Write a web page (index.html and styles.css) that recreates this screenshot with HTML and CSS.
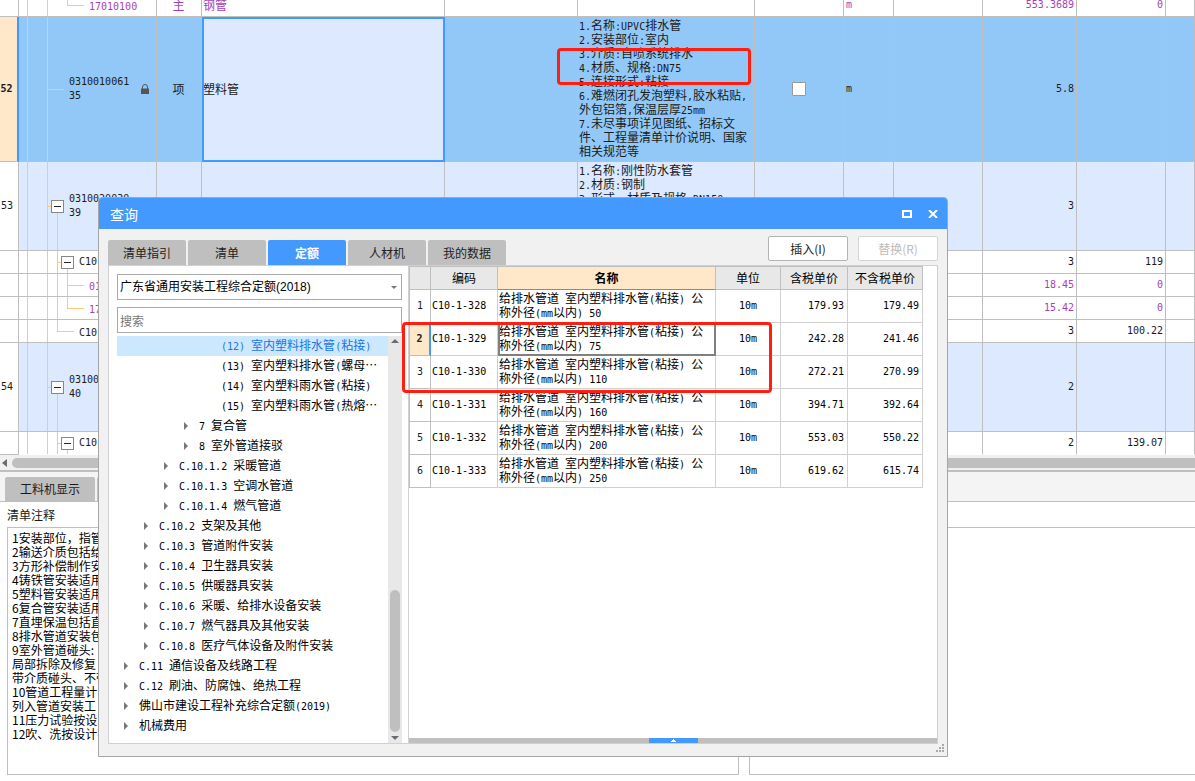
FILE: index.html
```html
<!DOCTYPE html>
<html lang="zh-CN">
<head>
<meta charset="utf-8">
<title>查询</title>
<link rel="stylesheet" href="styles.css">
</head>
<body>
<main class="workspace">
  <div class="sheet-view">
    <table class="sheet">
      <colgroup>
        <col class="w-no"><col class="w-code"><col class="w-type"><col class="w-name"><col class="w-spec"><col class="w-desc">
        <col class="w-check"><col class="w-unit"><col class="w-check"><col class="w-qty"><col class="w-check"><col>
      </colgroup>
      <tbody>
        <tr class="sub res">
          <th></th><td class="g g-first in-3"><span class="n">17010100</span></td><td class="mid">主</td><td>钢管</td><td></td><td></td><td></td><td class="n">m</td><td></td><td class="num">553.3689</td><td class="num">0</td><td></td>
        </tr>
        <tr class="current">
          <th>52</th>
          <td class="g g-leaf in-1">
            <div class="locked"><span class="n code">0310010061<br>35</span>
              <svg class="lock" viewBox="0 0 8 10" width="8" height="10"><path d="M1.5 5V3a2.5 2.5 0 0 1 5 0v2" fill="none" stroke="#555" stroke-width="1"/><path d="M0 4.5h8V10H0z" fill="#555"/></svg>
            </div>
          </td>
          <td class="mid">项</td><td class="active">塑料管</td><td></td>
          <td class="desc"><span class="n">1.</span>名称<span class="n">:UPVC</span>排水管<br><span class="n">2.</span>安装部位<span class="n">:</span>室内<br><span class="n">3.</span>介质<span class="n">:</span>自喷系统排水<br><span class="n">4.</span>材质、规格<span class="n">:DN75</span><br><span class="n">5.</span>连接形式<span class="n">:</span>粘接<br><span class="n">6.</span>难燃闭孔发泡塑料<span class="n">,</span>胶水粘贴<span class="n">,</span><br>外包铝箔<span class="n">,</span>保温层厚<span class="n">25mm</span><br><span class="n">7.</span>未尽事项详见图纸、招标文<br>件、工程量清单计价说明、国家<br>相关规范等</td>
          <td class="mid"><input class="check" type="checkbox" aria-label="选择"></td><td class="n">m</td><td></td><td class="num">5.8</td><td></td><td></td>
        </tr>
        <tr class="item">
          <th>53</th>
          <td class="g g-open1 in-box1"><div class="node"><button class="fold" aria-label="折叠"></button><span class="n code">0310020030<br>39</span></div></td>
          <td></td><td></td><td></td>
          <td class="desc"><span class="n">1.</span>名称<span class="n">:</span>刚性防水套管<br><span class="n">2.</span>材质<span class="n">:</span>钢制<br><span class="n">3.</span>形式、材质及规格<span class="n">:DN150</span></td>
          <td></td><td></td><td></td><td class="num">3</td><td></td><td></td>
        </tr>
        <tr class="sub"><th></th><td class="g g-open2 in-box2"><div class="node"><button class="fold" aria-label="折叠"></button><span class="n code">C10-</span></div></td><td></td><td></td><td></td><td></td><td></td><td></td><td></td><td class="num">3</td><td class="num">119</td><td></td></tr>
        <tr class="sub res"><th></th><td class="g g-mid in-3"><span class="n">01</span></td><td></td><td></td><td></td><td></td><td></td><td></td><td></td><td class="num">18.45</td><td class="num">0</td><td></td></tr>
        <tr class="sub res"><th></th><td class="g g-end in-3"><span class="n">17</span></td><td></td><td></td><td></td><td></td><td></td><td></td><td></td><td class="num">15.42</td><td class="num">0</td><td></td></tr>
        <tr class="sub"><th></th><td class="g g-last in-2"><span class="n">C10-</span></td><td></td><td></td><td></td><td></td><td></td><td></td><td></td><td class="num">3</td><td class="num">100.22</td><td></td></tr>
        <tr class="item">
          <th>54</th>
          <td class="g g-open1 in-box1"><div class="node"><button class="fold" aria-label="折叠"></button><span class="n code">0310020030<br>40</span></div></td>
          <td></td><td></td><td></td><td></td><td></td><td></td><td></td><td class="num">2</td><td></td><td></td>
        </tr>
        <tr class="sub tail"><th></th><td class="g g-open2 in-box2"><div class="node"><button class="fold" aria-label="折叠"></button><span class="n code">C10-</span></div></td><td></td><td></td><td></td><td></td><td></td><td></td><td></td><td class="num">2</td><td class="num">139.07</td><td></td></tr>
      </tbody>
    </table>
  </div>
  <div class="hscroll"><svg viewBox="0 0 5 8" width="5" height="8"><path d="M5 0v8L0 4z" fill="#6b6b75"/></svg><span class="hthumb"></span></div>
  <div class="bottom-tabs"><button class="btab">工料机显示</button><button class="btab" aria-label="更多"></button></div>
  <div class="notes">
    <section class="note">
      <label for="note-text">清单注释</label>
      <textarea id="note-text" readonly>1安装部位，指管
2输送介质包括给
3方形补偿制作安
4铸铁管安装适用
5塑料管安装适用
6复合管安装适用
7直埋保温包括直
8排水管道安装包
9室外管道碰头:
局部拆除及修复
带介质碰头、不带
10管道工程量计
列入管道安装工
11压力试验按设
12吹、洗按设计要</textarea>
    </section>
    <section class="note note-side">
      <label for="note-side"></label>
      <textarea id="note-side" aria-label="附注" readonly></textarea>
    </section>
  </div>
</main>

<div class="mark mark-spec"></div>

<div class="dialog" role="dialog" aria-labelledby="dlg-title">
  <header class="titlebar">
    <h1 id="dlg-title">查询</h1>
    <button class="win" aria-label="最大化"><svg viewBox="0 0 10 8" width="10" height="8"><path d="M1 1h8v6H1z" fill="none" stroke="#fff" stroke-width="2"/></svg></button>
    <button class="win" aria-label="关闭"><svg viewBox="0 0 10 8" width="10" height="8"><path d="M1 0l8 8M9 0L1 8" fill="none" stroke="#fff" stroke-width="2"/></svg></button>
  </header>
  <div class="toolbar">
    <nav class="tabs">
      <button>清单指引</button><button>清单</button><button class="on">定额</button><button>人材机</button><button>我的数据</button>
    </nav>
    <div class="actions"><button>插入(I)</button><button disabled>替换(R)</button></div>
  </div>
  <div class="panes">
    <div class="left">
      <div class="combo">
        <select aria-label="定额库"><option>广东省通用安装工程综合定额(2018)</option></select>
        <svg viewBox="0 0 6 3" width="6" height="3"><path d="M0 0h6L3 3z" fill="#777"/></svg>
      </div>
      <input class="search" type="text" placeholder="搜索" aria-label="搜索">
      <div class="tree-wrap">
        <ul class="tree">
          <li class="l5 sel"><span class="n">(12) </span>室内塑料排水管<span class="n">(</span>粘接<span class="n">)</span></li>
          <li class="l5"><span class="n">(13) </span>室内塑料排水管<span class="n">(</span>螺母…</li>
          <li class="l5"><span class="n">(14) </span>室内塑料雨水管<span class="n">(</span>粘接<span class="n">)</span></li>
          <li class="l5"><span class="n">(15) </span>室内塑料雨水管<span class="n">(</span>热熔…</li>
          <li class="p l4"><span class="n">7 </span>复合管</li>
          <li class="p l4"><span class="n">8 </span>室外管道接驳</li>
          <li class="p l3"><span class="n">C.10.1.2 </span>采暖管道</li>
          <li class="p l3"><span class="n">C.10.1.3 </span>空调水管道</li>
          <li class="p l3"><span class="n">C.10.1.4 </span>燃气管道</li>
          <li class="p l2"><span class="n">C.10.2 </span>支架及其他</li>
          <li class="p l2"><span class="n">C.10.3 </span>管道附件安装</li>
          <li class="p l2"><span class="n">C.10.4 </span>卫生器具安装</li>
          <li class="p l2"><span class="n">C.10.5 </span>供暖器具安装</li>
          <li class="p l2"><span class="n">C.10.6 </span>采暖、给排水设备安装</li>
          <li class="p l2"><span class="n">C.10.7 </span>燃气器具及其他安装</li>
          <li class="p l2"><span class="n">C.10.8 </span>医疗气体设备及附件安装</li>
          <li class="p l1"><span class="n">C.11 </span>通信设备及线路工程</li>
          <li class="p l1"><span class="n">C.12 </span>刷油、防腐蚀、绝热工程</li>
          <li class="p l1">佛山市建设工程补充综合定额<span class="n">(2019)</span></li>
          <li class="p l1">机械费用</li>
        </ul>
        <div class="vscroll">
          <svg viewBox="0 0 8 4" width="8" height="4"><path d="M0 4h8L4 0z" fill="#6b6b75"/></svg>
          <span class="vthumb"></span>
          <svg viewBox="0 0 8 4" width="8" height="4"><path d="M0 0h8L4 4z" fill="#6b6b75"/></svg>
        </div>
      </div>
    </div>
    <div class="right">
      <table class="quota">
        <colgroup><col class="q-no"><col class="q-code"><col class="q-name"><col class="q-unit"><col class="q-p1"><col class="q-p2"></colgroup>
        <thead><tr><th></th><th>编码</th><th class="hot">名称</th><th>单位</th><th>含税单价</th><th>不含税单价</th></tr></thead>
        <tbody>
          <tr><th>1</th><td class="n">C10-1-328</td><td class="title">给排水管道<span class="n"> </span>室内塑料排水管<span class="n">(</span>粘接<span class="n">) </span>公<br>称外径<span class="n">(mm</span>以内<span class="n">) 50</span></td><td class="n mid">10m</td><td class="num">179.93</td><td class="num">179.49</td></tr>
          <tr class="picked"><th>2</th><td class="n">C10-1-329</td><td class="title focus">给排水管道<span class="n"> </span>室内塑料排水管<span class="n">(</span>粘接<span class="n">) </span>公<br>称外径<span class="n">(mm</span>以内<span class="n">) 75</span></td><td class="n mid">10m</td><td class="num">242.28</td><td class="num">241.46</td></tr>
          <tr><th>3</th><td class="n">C10-1-330</td><td class="title">给排水管道<span class="n"> </span>室内塑料排水管<span class="n">(</span>粘接<span class="n">) </span>公<br>称外径<span class="n">(mm</span>以内<span class="n">) 110</span></td><td class="n mid">10m</td><td class="num">272.21</td><td class="num">270.99</td></tr>
          <tr><th>4</th><td class="n">C10-1-331</td><td class="title">给排水管道<span class="n"> </span>室内塑料排水管<span class="n">(</span>粘接<span class="n">) </span>公<br>称外径<span class="n">(mm</span>以内<span class="n">) 160</span></td><td class="n mid">10m</td><td class="num">394.71</td><td class="num">392.64</td></tr>
          <tr><th>5</th><td class="n">C10-1-332</td><td class="title">给排水管道<span class="n"> </span>室内塑料排水管<span class="n">(</span>粘接<span class="n">) </span>公<br>称外径<span class="n">(mm</span>以内<span class="n">) 200</span></td><td class="n mid">10m</td><td class="num">553.03</td><td class="num">550.22</td></tr>
          <tr><th>6</th><td class="n">C10-1-333</td><td class="title">给排水管道<span class="n"> </span>室内塑料排水管<span class="n">(</span>粘接<span class="n">) </span>公<br>称外径<span class="n">(mm</span>以内<span class="n">) 250</span></td><td class="n mid">10m</td><td class="num">619.62</td><td class="num">615.74</td></tr>
        </tbody>
      </table>
      <div class="drawer"><button aria-label="展开"><svg viewBox="0 0 5 3" width="5" height="3"><path d="M0 2h5v1H0zM1 1h3v1H1zM2 0h1v1H2z" fill="#fff"/></svg></button></div>
    </div>
  </div>
  <svg class="grip" viewBox="0 0 8 8" width="8" height="8"><path d="M6 0h2v2H6zM3 3h2v2H3zM6 3h2v2H6zM0 6h2v2H0zM3 6h2v2H3zM6 6h2v2H6z" fill="#aaa"/></svg>
  <div class="mark mark-rows"></div>
</div>
</body>
</html>
```
FILE: styles.css
```css
* { box-sizing: border-box; }

:root {
  --line: #bfbfbf;
  --blue: #4499ff;
  --guide: #ffc777;
  --ink: #1a1a1a;
}

body {
  margin: 0;
  position: relative;
  font: 12px/14px "Noto Sans CJK SC", "Liberation Sans", sans-serif;
  color: var(--ink);
  background: #fff;
  overflow: hidden;
}

button, input, select, textarea { font: inherit; color: inherit; margin: 0; }
button { padding: 0; border: 0; }
svg { display: block; }

/* half-width characters: 6px advance */
.n, .num { font-family: "DejaVu Sans Mono", "Liberation Mono", monospace; font-size: 10px; }
span.n { line-height: 10px; white-space: pre; }
span.n.code { display: inline-block; line-height: 14px; }
.mid { text-align: center; }

.workspace { display: flex; flex-direction: column; height: 100vh; }

/* bill sheet */
.sheet-view { overflow: hidden; flex: none; }
.sheet { width: 100%; margin-top: -6px; table-layout: fixed; border-collapse: separate; border-spacing: 0; }
.w-no { width: 19px; }
.w-code { width: 138px; }
.w-type { width: 45px; }
.w-name { width: 243px; }
.w-spec { width: 133px; }
.w-desc { width: 177px; }
.w-check { width: 89px; }
.w-unit { width: 50px; }
.w-qty { width: 94px; }

.sheet th, .sheet td {
  padding: 0 2px 0 1px;
  border-right: 1px solid var(--line);
  border-bottom: 1px solid var(--line);
  white-space: nowrap;
  overflow: hidden;
}
.sheet td.n { padding-left: 2px; }
.sheet td.num { text-align: right; }
.sheet th { padding: 0 4px 0 0; font: 10px/14px "DejaVu Sans Mono", monospace; text-align: center; background: #fff; }
.sub { height: 23px; --half: 11px; }
.item { height: 89px; --half: 44px; background: #dde9fe; }
.current { height: 145px; --half: 72px; background: #92c8f7; }
.res { color: #a63fb5; }
.sheet .current th { background: #ffe7c9; border-right: 2px solid var(--blue); font-weight: bold; }
.tail td { border-bottom-color: transparent; }
.sheet td.desc { vertical-align: top; padding: 1px 0 0 1px; }
.active { background: #dde9fe; outline: 2px solid var(--blue); outline-offset: -2px; }
.check { appearance: none; display: block; width: 14px; height: 14px; margin: 0 auto; background: #fff; border: 1px solid #999; border-radius: 1px; }

.locked, .node { display: flex; align-items: center; }
.lock { margin-left: 12px; }
.node { gap: 5px; }
.fold {
  width: 13px; height: 13px; border: 1px solid #888;
  background: linear-gradient(#222, #222) center / 7px 1px no-repeat #fff;
}
.sheet td.in-1 { padding-left: 50px; }
.sheet td.in-2 { padding-left: 60px; }
.sheet td.in-3 { padding-left: 70px; }
.sheet td.in-box1 { padding-left: 32px; }
.sheet td.in-box2 { padding-left: 42px; }

/* tree guides */
.g { --c: linear-gradient(var(--guide), var(--guide)); background-repeat: no-repeat; }
.g-first {
  background-image: var(--c), var(--c), var(--c), var(--c);
  background-position: 8px 0, 28px 0, 48px 0, 48px var(--half);
  background-size: 1px 100%, 1px 100%, 1px var(--half), 17px 1px;
}
.g-leaf {
  background-image: var(--c), var(--c), var(--c);
  background-position: 8px 0, 28px 0, 28px var(--half);
  background-size: 1px 100%, 1px 100%, 17px 1px;
}
.g-open1 {
  background-image: var(--c), var(--c), var(--c), var(--c);
  background-position: 8px 0, 28px 0, 38px var(--half), 28px var(--half);
  background-size: 1px 100%, 1px 100%, 1px var(--half), 5px 1px;
}
.g-open2 {
  background-image: var(--c), var(--c), var(--c), var(--c), var(--c);
  background-position: 8px 0, 28px 0, 38px 0, 48px var(--half), 38px var(--half);
  background-size: 1px 100%, 1px 100%, 1px 100%, 1px var(--half), 5px 1px;
}
.g-mid {
  background-image: var(--c), var(--c), var(--c), var(--c), var(--c);
  background-position: 8px 0, 28px 0, 38px 0, 48px 0, 48px var(--half);
  background-size: 1px 100%, 1px 100%, 1px 100%, 1px 100%, 17px 1px;
}
.g-end {
  background-image: var(--c), var(--c), var(--c), var(--c), var(--c);
  background-position: 8px 0, 28px 0, 38px 0, 48px 0, 48px var(--half);
  background-size: 1px 100%, 1px 100%, 1px 100%, 1px var(--half), 17px 1px;
}
.g-last {
  background-image: var(--c), var(--c), var(--c), var(--c);
  background-position: 8px 0, 28px 0, 38px 0, 38px var(--half);
  background-size: 1px 100%, 1px 100%, 1px var(--half), 17px 1px;
}

.hscroll { display: flex; align-items: center; gap: 5px; height: 17px; padding: 1px 0 0 2px; background: #f0f0f0; border-bottom: 2px solid var(--line); flex: none; }
.hthumb { flex: 1; height: 10px; background: var(--line); border-radius: 5px 0 0 5px; }

.bottom-tabs { display: flex; align-items: flex-end; gap: 2px; height: 30px; padding-left: 5px; background: #f4f4f4; border-bottom: 1px solid var(--line); flex: none; }
.btab { width: 90px; height: 24px; background: var(--line); border-radius: 2px 2px 0 0; }

.notes { display: grid; grid-template-columns: 739fr 456fr; flex: 1; min-height: 0; padding-bottom: 6px; }
.note { display: flex; flex-direction: column; padding-left: 7px; }
.note label { height: 25px; line-height: 26px; flex: none; }
.note textarea { flex: 1; min-height: 0; border: 1px solid var(--line); border-radius: 0; resize: none; outline: 0; padding: 3px 4px; background: #fff; overflow: hidden; color: #000; }
.note-side { padding-left: 10px; }
.note-side textarea { border-right: 0; }

/* red annotation frames */
.mark { position: absolute; border: 3px solid #ff1e10; border-radius: 4px; pointer-events: none; }
.mark-spec { left: 557px; top: 48px; width: 194px; height: 37px; }
.mark-rows { left: 303px; top: 124px; width: 370px; height: 71px; }

/* dialog window */
.dialog {
  position: absolute; left: 98px; top: 197px; width: 850px; height: 560px;
  display: flex; flex-direction: column;
  background: #f1f1f1; border: 1px solid #a6a6a6; border-radius: 4px 4px 0 0;
  color: #222;
}
.titlebar { display: flex; align-items: center; gap: 16px; height: 31px; padding: 0 9px 0 11px; background: var(--blue); border-radius: 3px 3px 0 0; color: #fff; flex: none; }
.titlebar h1 { flex: 1; margin: 0; font-size: 14px; line-height: 20px; font-weight: normal; }
.win { background: none; }

.toolbar { display: flex; justify-content: space-between; align-items: flex-end; height: 36px; padding: 0 9px; flex: none; }
.tabs { display: flex; gap: 2px; }
.tabs button { width: 78px; height: 25px; background: var(--line); border-radius: 2px 2px 0 0; }
.tabs .on { background: var(--blue); color: #fff; font-weight: bold; }
.actions { display: flex; gap: 10px; padding-bottom: 4px; }
.actions button { width: 80px; height: 25px; background: #fff; border: 1px solid #b4b4b4; border-radius: 2px; }
.actions button:disabled { color: #bbb; border-color: #d4d4d4; }

.panes { display: flex; flex: 1; min-height: 0; margin: 0 9px 12px; border: 1px solid #d0d0d0; background: #fff; color: #000; }
.left { display: flex; flex-direction: column; width: 293px; padding: 8px 0 0 8px; flex: none; }
.combo { display: grid; align-items: center; margin-bottom: 7px; }
.combo > * { grid-area: 1 / 1; }
.combo svg { justify-self: end; margin-right: 5px; }
.combo select, .search { width: 285px; height: 26px; border: 1px solid #aaa; border-radius: 0; background: #fff; padding: 0 2px; appearance: none; outline: 0; }
.combo select { font-family: "Liberation Sans", "Noto Sans CJK SC", sans-serif; }
.search::placeholder { color: #777; }
.tree-wrap { display: flex; flex: 1; margin-top: 3px; min-height: 0; }
.tree { flex: 1; margin: 0; padding: 0; list-style: none; line-height: 18px; white-space: nowrap; }
.tree li { display: flex; align-items: baseline; height: 20px; overflow: hidden; }
.p::before { content: ""; width: 4px; height: 8px; margin-right: 11px; background: #777; clip-path: polygon(0 0, 100% 50%, 0 100%); align-self: center; }
.sel { background: #cce8ff; color: #1a73e8; }
.l1 { padding-left: 7px; }
.l2 { padding-left: 27px; }
.l3 { padding-left: 47px; }
.l4 { padding-left: 67px; }
.l5 { padding-left: 104px; }
.vscroll { display: flex; flex-direction: column; align-items: center; justify-content: space-between; width: 14px; padding: 3px 0; background: #e8e8e8; }
.vthumb { width: 10px; height: 142px; margin: auto 0 4px; border-radius: 5px; background: var(--line); }

.right { display: flex; flex-direction: column; flex: 1; margin-left: 6px; border-left: 1px solid #d0d0d0; }
.quota { table-layout: fixed; width: 514px; border-collapse: separate; border-spacing: 0; border-top: 1px solid var(--line); border-left: 1px solid var(--line); }
.q-no { width: 21px; }
.q-code { width: 67px; }
.q-name { width: 218px; }
.q-unit { width: 65px; }
.q-p1 { width: 67px; }
.q-p2 { width: 75px; }
.quota tr { height: 33px; }
.quota thead tr { height: 23px; }
.quota th, .quota td { padding: 0 1px; border-right: 1px solid #d0d0d0; border-bottom: 1px solid #d0d0d0; white-space: nowrap; }
.quota .title { padding-bottom: 2px; }
.quota thead th { background: #e8e8e8; font-weight: normal; border-color: var(--line); }
.quota thead .hot { background: #ffe7c9; font-weight: bold; border-bottom-color: var(--blue); }
.quota tbody th { font: 10px/14px "DejaVu Sans Mono", monospace; border-color: var(--line); color: #222; }
.quota .num { text-align: right; padding-right: 3px; }
.quota .picked th { background: #ffe7c9; font-weight: bold; border-right: 2px solid var(--blue); }
.focus { outline: 2px solid #808080; outline-offset: -2px; }
.drawer { display: flex; justify-content: center; height: 5px; margin-top: auto; background: var(--line); }
.drawer button { display: flex; align-items: center; justify-content: center; width: 49px; height: 5px; background: var(--blue); }
.grip { position: absolute; right: 3px; bottom: 4px; }
```
